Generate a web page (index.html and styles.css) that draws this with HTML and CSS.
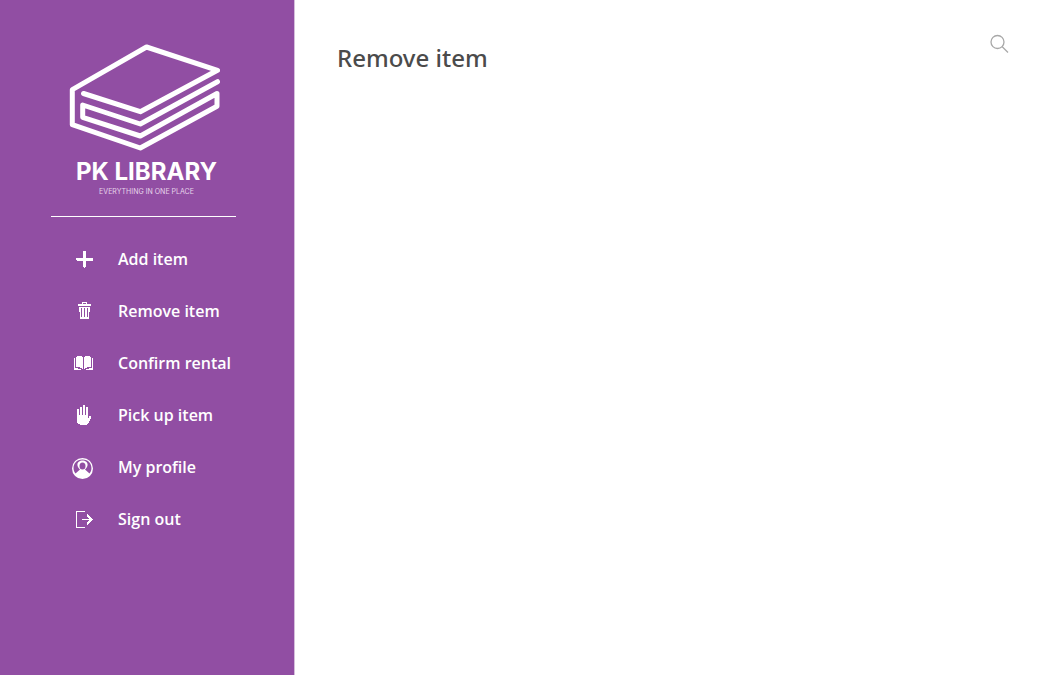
FILE: index.html
```html
<!DOCTYPE html>
<html lang="en">
<head>
<meta charset="utf-8">
<meta name="viewport" content="width=device-width, initial-scale=1">
<title>PK Library - Remove item</title>
<link rel="stylesheet" href="styles.css">
</head>
<body>
<div class="app">
  <aside class="sidebar">
    <div class="brand">
      <svg class="brand-mark" viewBox="69 44 151 107" aria-hidden="true">
        <path d="M83.5 93.5 140.3 111.7 217.5 70.3 146.5 47 72.3 89.7V124.7L140.3 148 217 106.3V93.5L140.3 136 82.7 117.3V105L140.3 124 217.5 81.7"/>
      </svg>
      <div class="brand-text">
        <div class="brand-name">PK LIBRARY</div>
        <div class="brand-tagline">EVERYTHING IN ONE PLACE</div>
      </div>
    </div>
    <nav class="menu">
      <a class="menu-link" href="#add">
        <svg class="menu-icon" viewBox="0 0 24 24" shape-rendering="crispEdges" aria-hidden="true"><path d="M11 4h3v7h7v3h-7v6h-1v1h-1v-1h-1v-6H5v-1H4v-2h7z"/></svg>
        <span>Add item</span>
      </a>
      <a class="menu-link" href="#remove">
        <svg class="menu-icon" viewBox="0 0 24 24" shape-rendering="crispEdges" aria-hidden="true"><path fill-rule="evenodd" d="M10 3h5v2h4v2H6V5h4zm1 1v1h3V4zM7 8h11v5h-1v7H8v-7H7zm2 1v9h1V9zm3 0v9h1V9zm3 0v9h1V9z"/></svg>
        <span>Remove item</span>
      </a>
      <a class="menu-link" href="#rental">
        <svg class="menu-icon" viewBox="0 0 24 24" shape-rendering="crispEdges" aria-hidden="true"><path d="M5 5h5v1h1v12h-1v-1H8v-1H4V6h1zM18 5h-5v1h-1v12h1v-1h2v-1h4V6h-1zM2 7h1v10h3v1h3v1H2zM21 7h-1v10h-3v1h-3v1h7z"/></svg>
        <span>Confirm rental</span>
      </a>
      <a class="menu-link" href="#pickup">
        <svg class="menu-icon" viewBox="0 0 24 24" shape-rendering="crispEdges" aria-hidden="true"><path d="M5 6h2v6h1V4h2v8h1V2h2v10h1V4h2v11h1v-2h2v3h-1v2h-1v2h-1v1h-1v1H8v-1H6v-1H5z"/></svg>
        <span>Pick up item</span>
      </a>
      <a class="menu-link" href="#profile">
        <svg class="menu-icon" viewBox="0 0 24 24" aria-hidden="true"><g transform="translate(0 1)"><path fill-rule="evenodd" d="M10.500 2a10.500 10.500 0 1 1 0 21 10.500 10.500 0 0 1 0-21zm0 1.500C1.500 3.500-.5 13 3.500 17.500L8 13.500C3 9 6 4.500 10.500 4.500S18 9 13 13.500l4.500 4C21.500 13 19.500 3.500 10.500 3.500zm0 3a3 3.500 0 1 0 0 7 3 3.500 0 0 0 0-7z"/></g></svg>
        <span>My profile</span>
      </a>
      <a class="menu-link" href="#signout">
        <svg class="menu-icon" viewBox="0 0 24 24" shape-rendering="crispEdges" aria-hidden="true"><path d="M4 4h9v1H5v15h8v1H4zM10 12h10v1H10z"/><path class="arrow-head" d="m15 8 5 4.500-5 4.500"/></svg>
        <span>Sign out</span>
      </a>
    </nav>
  </aside>
  <main class="content">
    <h1 class="title">Remove item</h1>
    <button class="search" type="button" aria-label="Search">
      <svg class="search-icon" viewBox="0 0 20 20" aria-hidden="true"><circle cx="8.500" cy="8" r="6.500"/><path d="m13 12.500 6 6"/></svg>
    </button>
  </main>
</div>
</body>
</html>
```

FILE: styles.css
```css
* {
  box-sizing: border-box;
}

body {
  margin: 0;
  background: #fff;
  color: #4b4b4b;
  font-family: "Open Sans", "Noto Sans", sans-serif;
}

.app {
  display: flex;
  min-height: 100vh;
}

.sidebar {
  flex: 0 0 28%;
  padding: 44px 58px 0 51px;
  background: #914ea3;
  color: #fff;
}

.brand {
  display: flex;
  flex-direction: column;
  align-items: center;
  padding: 0 0 20px 2px;
  border-bottom: 1px solid #fff;
}

.brand-mark {
  width: 151px;
  height: 107px;
}

.brand-mark path {
  fill: none;
  stroke: #fff;
  stroke-width: 5;
  stroke-linecap: round;
  stroke-linejoin: round;
}

.brand-text {
  padding: 6px 0 0 4px;
  text-align: center;
  white-space: nowrap;
}

.brand-name {
  font: 700 24px/30px Inter, sans-serif;
}

.brand-tagline {
  font: 400 7px/9px Inter, sans-serif;
  color: #e6d5ea;
}

.menu {
  display: flex;
  flex-direction: column;
  gap: 28px;
  padding: 30px 0 0 21px;
}

.menu-link {
  display: flex;
  align-items: center;
  gap: 22px;
  color: #fff;
  font-size: 16px;
  font-weight: 600;
  line-height: 24px;
  text-decoration: none;
  white-space: nowrap;
}

.menu-icon {
  flex: none;
  width: 24px;
  height: 24px;
  fill: #fff;
}

.arrow-head {
  fill: none;
  stroke: #fff;
  stroke-width: 2;
}

.content {
  flex: 1;
  display: flex;
  align-items: flex-start;
  justify-content: space-between;
  padding: 34px 41px 0 42px;
  border-left: 1px solid #d5bedb;
}

.title {
  margin: 8px 0 0;
  font-family: "Noto Sans", "Open Sans", sans-serif;
  font-size: 24px;
  font-weight: 500;
  line-height: 32px;
}

.search {
  display: flex;
  padding: 0;
  border: 0;
  background: none;
  cursor: pointer;
}

.search-icon {
  width: 20px;
  height: 20px;
  fill: none;
  stroke: #a8a8a8;
  stroke-width: 1.3;
}
```
